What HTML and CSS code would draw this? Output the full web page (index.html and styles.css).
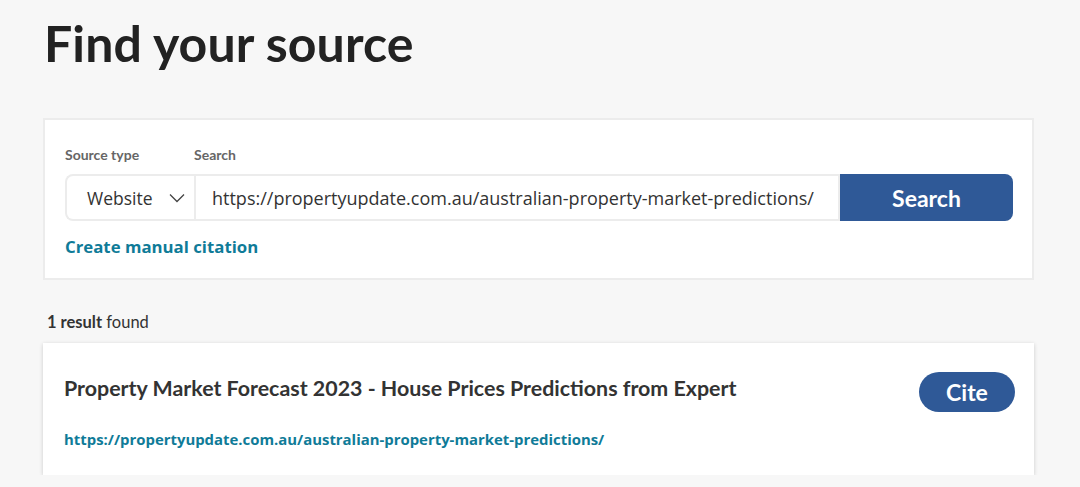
FILE: index.html
```html
<!DOCTYPE html>
<html>
<head>
    <title>Find your source</title>
    <link rel="stylesheet" href="styles.css">
</head>
<body>

    <h1 class="page-title">Find your source</h1>

    <div class="search-card">
        <div class="labels">
            <span class="label label-type">Source type</span>
            <span class="label">Search</span>
        </div>
        <div class="search-row">
            <div class="source-select">
                <span>Website</span>
                <svg class="chevron" width="16" height="10" viewBox="0 0 16 10"><path d="M1 1.5 L8 8.5 L15 1.5" fill="none" stroke="#444" stroke-width="1.3"/></svg>
            </div>
            <div class="search-input">https://propertyupdate.com.au/australian-property-market-predictions/</div>
            <button class="search-btn">Search</button>
        </div>
        <a class="manual-link" href="#">Create manual citation</a>
    </div>

    <p class="result-count"><b>1 result</b> found</p>

    <div class="result-card">
        <div class="result-info">
            <div class="result-title">Property Market Forecast 2023 - House Prices Predictions from Expert</div>
            <a class="result-url" href="#">https://propertyupdate.com.au/australian-property-market-predictions/</a>
        </div>
        <button class="cite-btn">Cite</button>
    </div>

</body>
</html>
```

FILE: styles.css
```css
body { margin: 0; padding: 0 46px 0 43px; background-color: #f7f7f7; font-family: Lato, "Open Sans", sans-serif; color: #222; }
.page-title { font-family: Lato, sans-serif; font-size: 50px; font-weight: 700; color: #222; margin: 0; padding: 13px 0 0 1px; line-height: 60px; letter-spacing: 0.1px; }
.search-card { margin-top: 45px; background-color: #fff; border: 2px solid #ececec; padding: 27px 19px 20px 20px; }
.labels { display: flex; font-size: 14px; font-weight: 700; color: #666; line-height: 16px; }
.label-type { width: 129px; }
.search-row { display: flex; margin-top: 11px; height: 47px; }
.source-select { display: flex; align-items: center; justify-content: space-between; width: 98px; padding: 0 9px 0 20px; border: 2px solid #ececec; border-right: none; border-radius: 8px 0 0 8px; font-family: "Open Sans", sans-serif; font-size: 17.5px; color: #333; }
.chevron { margin-top: 1px; }
.search-input { flex: 1; display: flex; align-items: center; padding-left: 16px; border: 2px solid #ececec; font-family: "Open Sans", sans-serif; font-size: 18px; color: #333; white-space: nowrap; overflow: hidden; }
.search-btn { width: 173px; border: none; background-color: #2f5997; color: #fff; font-family: Lato, sans-serif; font-size: 23px; font-weight: 700; border-radius: 0 8px 8px 0; padding: 0; }
.manual-link { display: inline-block; margin-top: 14px; font-family: "Open Sans", sans-serif; font-size: 16.8px; font-weight: 700; color: #0f7b98; text-decoration: none; }
.result-count { margin: 32px 0 0 4px; font-size: 16.5px; color: #333; line-height: 20px; }
.result-count b { font-weight: 700; }
.result-card { display: flex; justify-content: space-between; margin-top: 11px; background-color: #fff; box-shadow: 0 1px 4px rgba(0,0,0,0.18); padding: 32px 19px 26px 21px; }
.result-title { font-family: Lato, sans-serif; font-size: 21.4px; font-weight: 700; color: #333; line-height: 26px; }
.result-url { display: inline-block; margin-top: 28px; font-family: "Open Sans", sans-serif; font-size: 14.9px; font-weight: 700; color: #0f7b98; text-decoration: none; }
.cite-btn { align-self: flex-start; margin-top: -3px; width: 96px; height: 40px; border: none; border-radius: 20px; background-color: #2f5997; color: #fff; font-family: Lato, sans-serif; font-size: 23px; font-weight: 700; padding: 0; }
```
